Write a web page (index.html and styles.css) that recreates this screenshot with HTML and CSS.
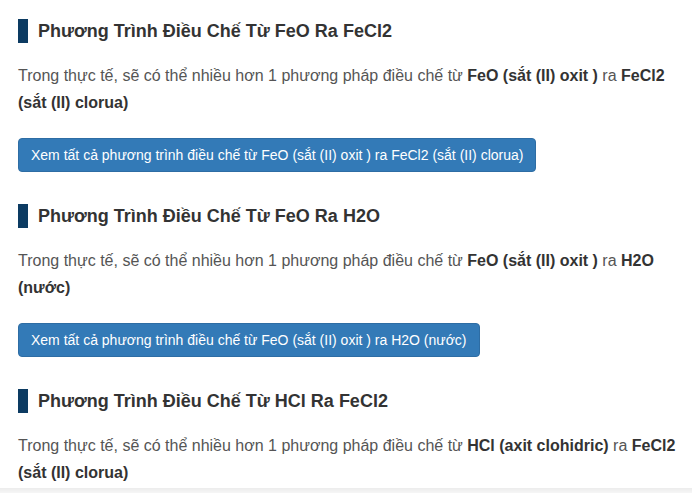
FILE: index.html
```html
<!DOCTYPE html>
<html lang="vi">
<head>
<meta charset="utf-8">
<link rel="stylesheet" href="styles.css">
</head>
<body>
<div class="page">
  <section class="block">
    <h2 class="title">Phương Trình Điều Chế Từ FeO Ra FeCl2</h2>
    <p class="desc">Trong thực tế, sẽ có thể nhiều hơn 1 phương pháp điều chế từ <b>FeO (sắt (II) oxit )</b> ra <b>FeCl2 (sắt (II) clorua)</b></p>
    <a class="btn">Xem tất cả phương trình điều chế từ FeO (sắt (II) oxit ) ra FeCl2 (sắt (II) clorua)</a>
  </section>
  <section class="block">
    <h2 class="title">Phương Trình Điều Chế Từ FeO Ra H2O</h2>
    <p class="desc">Trong thực tế, sẽ có thể nhiều hơn 1 phương pháp điều chế từ <b>FeO (sắt (II) oxit )</b> ra <b>H2O (nước)</b></p>
    <a class="btn">Xem tất cả phương trình điều chế từ FeO (sắt (II) oxit ) ra H2O (nước)</a>
  </section>
  <section class="block">
    <h2 class="title">Phương Trình Điều Chế Từ HCl Ra FeCl2</h2>
    <p class="desc">Trong thực tế, sẽ có thể nhiều hơn 1 phương pháp điều chế từ <b>HCl (axit clohidric)</b> ra <b>FeCl2 (sắt (II) clorua)</b></p>
  </section>
</div>
<div class="footer-edge"></div>
</body>
</html>
```

FILE: styles.css
```css
html, body {
  margin: 0;
  padding: 0;
  background: #fff;
}
body {
  font-family: "Liberation Sans", Arial, sans-serif;
  color: #555;
  height: 493px;
  overflow: hidden;
  position: relative;
}
.page {
  padding: 19px 10px 0 18px;
}
.block {
  padding-bottom: 32px;
}
.block:last-child {
  padding-bottom: 0;
}
.title {
  display: flex;
  align-items: center;
  gap: 10px;
  margin: 0;
  font-size: 18px;
  font-weight: bold;
  color: #333;
  line-height: 24px;
  height: 24px;
}
.title::before {
  content: "";
  display: block;
  width: 10px;
  height: 24px;
  background: #0c3b62;
  flex: none;
}
.desc {
  margin: 19px 0 0 0;
  font-size: 16px;
  line-height: 27px;
  color: #555;
}
.desc b {
  color: #333;
}
.btn {
  display: inline-block;
  margin-top: 22px;
  padding: 6px 12px;
  font-size: 14px;
  line-height: 20px;
  color: #fff;
  background: #337ab7;
  border: 1px solid #2e6da4;
  border-radius: 4px;
}
.footer-edge {
  position: absolute;
  left: 0;
  right: 0;
  bottom: 0;
  height: 5px;
  background: linear-gradient(#ececec, #f6f6f6);
}
```
